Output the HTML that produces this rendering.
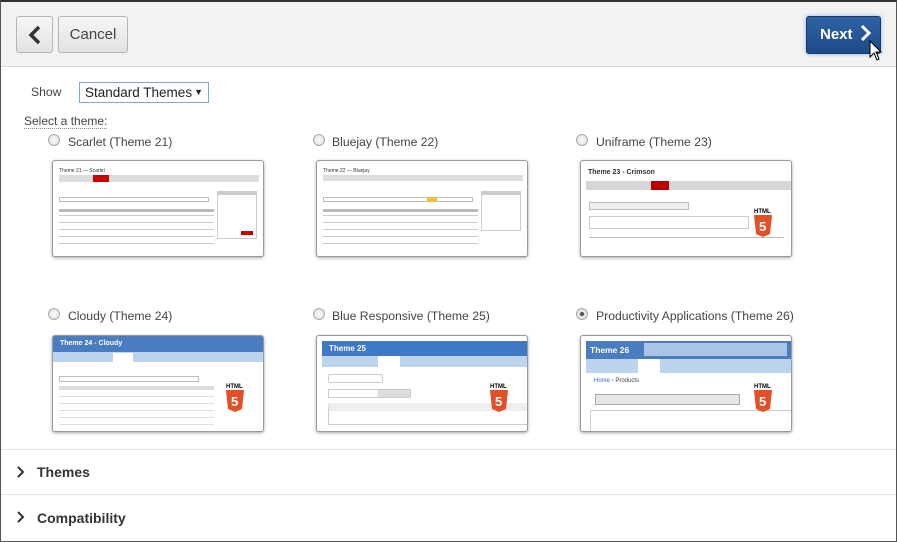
<!DOCTYPE html>
<html><head><meta charset="utf-8"><style>
*{box-sizing:border-box;margin:0;padding:0}
body{width:897px;height:542px;overflow:hidden;font-family:"Liberation Sans",Arial,sans-serif;background:#fff;position:relative;color:#333}
.frame{position:absolute;left:0;top:0;width:897px;height:542px;border:1px solid #555;border-top:2px solid #333}
.hdr{position:absolute;left:1px;top:2px;width:895px;height:65px;background:#f2f2f2;border-bottom:1px solid #d6d6d6}
.btn{position:absolute;top:16px;height:37px;border:1px solid #b5b5b5;border-radius:3px;background:linear-gradient(#f6f6f6,#e2e2e2);font-size:15px;color:#444;text-align:center;line-height:35px}
.next{position:absolute;left:806px;top:16px;width:75px;height:38px;border-radius:3px;background:linear-gradient(#2f63a6,#1d4a88);border:1px solid #16396a;box-shadow:0 0 4px #8ab0e0;color:#fff;font-weight:bold;font-size:15px;line-height:36px;padding-left:13px}
.abs{position:absolute}
.lbl{position:absolute;font-size:12.2px;color:#444}
.radio{position:absolute;width:12px;height:12px;border-radius:50%;border:1px solid #aaa;background:radial-gradient(#fafafa,#ddd)}
.th{position:absolute;width:212px;height:97px;border:1px solid #9a9a9a;border-radius:3px;background:#fff;box-shadow:0 1px 3px rgba(0,0,0,.35);overflow:hidden;font-size:5px;color:#333}
.sec{position:absolute;left:1px;width:895px;border-top:1px solid #e3e3e3;font-size:14px;font-weight:bold;color:#333}
</style></head><body>
<div class="frame"></div>
<div class="hdr"></div>
<div class="btn" style="left:16px;width:37px"><svg width="14" height="20" viewBox="0 0 14 20" style="margin-top:8px"><path d="M11 2 L3 10 L11 18" stroke="#333" stroke-width="3.5" fill="none"/></svg></div>
<div class="btn" style="left:58px;width:70px">Cancel</div>
<div class="next">Next <svg width="12" height="18" viewBox="0 0 12 18" style="vertical-align:-3px;margin-left:3px"><path d="M2 2 L9 9 L2 16" stroke="#fff" stroke-width="3" fill="none"/></svg></div>
<svg class="abs" style="left:869px;top:40px" width="14" height="22" viewBox="0 0 14 22"><path d="M1 1 L1 17 L5 13 L8 20 L10 19 L7 12 L12 12 Z" fill="#fff" stroke="#000" stroke-width="1"/></svg>

<div class="lbl" style="left:31px;top:85px">Show</div>
<div class="abs" style="left:79px;top:82px;width:130px;height:21px;border:1px solid #7ea6d8;background:#fff;font-size:13.5px;line-height:19px;padding-left:5px;color:#222">Standard Themes <span style="position:absolute;right:5px;font-size:9px">▼</span></div>
<div class="lbl" style="left:24px;top:114px;font-size:12px;border-bottom:1px dotted #888;line-height:14px">Select a theme:</div>

<div class="radio" style="left:48px;top:134px"></div><div class="lbl" style="left:68px;top:135px">Scarlet (Theme 21)</div>
<div class="radio" style="left:313px;top:134px"></div><div class="lbl" style="left:332px;top:135px">Bluejay (Theme 22)</div>
<div class="radio" style="left:576px;top:134px"></div><div class="lbl" style="left:596px;top:135px">Uniframe (Theme 23)</div>
<div class="radio" style="left:48px;top:308px"></div><div class="lbl" style="left:68px;top:309px">Cloudy (Theme 24)</div>
<div class="radio" style="left:313px;top:308px"></div><div class="lbl" style="left:332px;top:309px">Blue Responsive (Theme 25)</div>
<div class="radio" style="left:576px;top:308px;background:radial-gradient(#555 25%,#eee 35%,#ccc)"></div><div class="lbl" style="left:596px;top:309px">Productivity Applications (Theme 26)</div>

<!-- Theme 21 -->
<div class="th" style="left:52px;top:160px">
<div class="abs" style="left:6px;top:7px;font-size:5px">Theme 21 — Scarlet</div>
<div class="abs" style="left:6px;top:14px;width:200px;height:7px;background:#ddd"></div>
<div class="abs" style="left:40px;top:14px;width:16px;height:7px;background:#c00"></div>
<div class="abs" style="left:6px;top:36px;width:150px;height:5px;border:1px solid #bbb"></div>
<div class="abs" style="left:6px;top:48px;width:155px;height:36px;background:repeating-linear-gradient(#fff 0 3px,#ccc 3px 4px,#fff 4px 7px);border-top:3px solid #bbb"></div>
<div class="abs" style="left:164px;top:30px;width:40px;height:48px;border:1px solid #ccc;border-top:4px solid #ccc"></div>
<div class="abs" style="left:188px;top:70px;width:12px;height:4px;background:#c00"></div>
</div>
<!-- Theme 22 -->
<div class="th" style="left:316px;top:160px">
<div class="abs" style="left:6px;top:7px">Theme 22 — Bluejay</div>
<div class="abs" style="left:6px;top:14px;width:200px;height:6px;background:#ddd"></div>
<div class="abs" style="left:6px;top:36px;width:150px;height:5px;border:1px solid #bbb"></div>
<div class="abs" style="left:110px;top:36px;width:10px;height:5px;background:#f0c030"></div>
<div class="abs" style="left:6px;top:48px;width:155px;height:36px;background:repeating-linear-gradient(#fff 0 3px,#ccc 3px 4px,#fff 4px 7px);border-top:3px solid #bbb"></div>
<div class="abs" style="left:164px;top:30px;width:40px;height:40px;border:1px solid #ccc;border-top:4px solid #ccc"></div>
</div>
<!-- Theme 23 -->
<div class="th" style="left:580px;top:160px">
<div class="abs" style="left:7px;top:8px;font-size:7px;font-weight:bold">Theme 23 - Crimson</div>
<div class="abs" style="left:5px;top:20px;width:205px;height:9px;background:#d6d6d6"></div>
<div class="abs" style="left:70px;top:20px;width:18px;height:9px;background:#b00"></div>
<div class="abs" style="left:8px;top:41px;width:100px;height:8px;border:1px solid #bbb;background:#eee"></div>
<div class="abs" style="left:8px;top:55px;width:160px;height:13px;border:1px solid #ccc"></div>
<div class="abs" style="left:8px;top:76px;width:195px;height:1px;background:#bbb"></div>
<svg class="abs" style="left:172px;top:46px" width="20" height="30" viewBox="0 0 20 30"><text x="1" y="6" font-size="6" font-weight="bold" font-family="Liberation Sans">HTML</text><path d="M1 8 H19 L17 27 L10 30 L3 27 Z" fill="#e34f26"/><text x="6" y="24" font-size="13" font-weight="bold" fill="#fff" font-family="Liberation Sans">5</text></svg>
</div>
<!-- Theme 24 -->
<div class="th" style="left:52px;top:335px">
<div class="abs" style="left:0;top:0;width:212px;height:16px;background:#4a7cc0;color:#fff;font-size:7px;font-weight:bold;padding:4px 0 0 7px">Theme 24 - Cloudy</div>
<div class="abs" style="left:0;top:16px;width:212px;height:10px;background:#bcd3ee"></div>
<div class="abs" style="left:60px;top:17px;width:20px;height:9px;background:#fff"></div>
<div class="abs" style="left:6px;top:40px;width:140px;height:6px;border:1px solid #bbb"></div>
<div class="abs" style="left:6px;top:50px;width:155px;height:40px;background:repeating-linear-gradient(#fff 0 6px,#ddd 6px 7px);border-top:4px solid #ddd"></div>
<svg class="abs" style="left:172px;top:46px" width="20" height="30" viewBox="0 0 20 30"><text x="1" y="6" font-size="6" font-weight="bold" font-family="Liberation Sans">HTML</text><path d="M1 8 H19 L17 27 L10 30 L3 27 Z" fill="#e34f26"/><text x="6" y="24" font-size="13" font-weight="bold" fill="#fff" font-family="Liberation Sans">5</text></svg>
</div>
<!-- Theme 25 -->
<div class="th" style="left:316px;top:335px">
<div class="abs" style="left:5px;top:5px;width:207px;height:15px;background:#3f78c4;color:#fff;font-size:8px;font-weight:bold;padding:3px 0 0 7px">Theme 25</div>
<div class="abs" style="left:5px;top:20px;width:207px;height:11px;background:#bcd3ee"></div>
<div class="abs" style="left:61px;top:20px;width:22px;height:11px;background:#fff"></div>
<div class="abs" style="left:11px;top:38px;width:55px;height:9px;border:1px solid #ccc;border-radius:2px"></div>
<div class="abs" style="left:11px;top:53px;width:83px;height:9px;border:1px solid #ccc;background:linear-gradient(90deg,#fff 60%,#ddd 60%)"></div>
<div class="abs" style="left:11px;top:67px;width:200px;height:22px;border:1px solid #ccc;border-top:8px solid #eee"></div>
<svg class="abs" style="left:172px;top:46px" width="20" height="30" viewBox="0 0 20 30"><text x="1" y="6" font-size="6" font-weight="bold" font-family="Liberation Sans">HTML</text><path d="M1 8 H19 L17 27 L10 30 L3 27 Z" fill="#e34f26"/><text x="6" y="24" font-size="13" font-weight="bold" fill="#fff" font-family="Liberation Sans">5</text></svg>
</div>
<!-- Theme 26 -->
<div class="th" style="left:580px;top:335px">
<div class="abs" style="left:5px;top:5px;width:207px;height:18px;background:#4a7cc0;color:#fff;font-size:8.5px;font-weight:bold;padding:4px 0 0 4px">Theme 26</div>
<div class="abs" style="left:63px;top:7px;width:143px;height:13px;background:#aac4e6"></div>
<div class="abs" style="left:5px;top:23px;width:207px;height:14px;background:#bcd3ee"></div>
<div class="abs" style="left:57px;top:23px;width:22px;height:14px;background:#fff"></div>
<div class="abs" style="left:13px;top:42px;font-size:6px;color:#36c">Home › <span style="color:#444">Products</span></div>
<div class="abs" style="left:14px;top:58px;width:145px;height:11px;border:1px solid #aaa;background:#e6e6e6"></div>
<div class="abs" style="left:9px;top:74px;width:205px;height:25px;border:1px solid #ccc"></div>
<svg class="abs" style="left:172px;top:46px" width="20" height="30" viewBox="0 0 20 30"><text x="1" y="6" font-size="6" font-weight="bold" font-family="Liberation Sans">HTML</text><path d="M1 8 H19 L17 27 L10 30 L3 27 Z" fill="#e34f26"/><text x="6" y="24" font-size="13" font-weight="bold" fill="#fff" font-family="Liberation Sans">5</text></svg>
</div>

<div class="sec" style="top:449px;height:45px;padding:14px 0 0 36px">Themes</div>
<div class="sec" style="top:494px;height:46px;padding:15px 0 0 36px">Compatibility</div>
<svg class="abs" style="left:17px;top:466px" width="8" height="12"><path d="M1 1 L6 6 L1 11" stroke="#333" stroke-width="2" fill="none"/></svg>
<svg class="abs" style="left:17px;top:511px" width="8" height="12"><path d="M1 1 L6 6 L1 11" stroke="#333" stroke-width="2" fill="none"/></svg>
</body></html>
